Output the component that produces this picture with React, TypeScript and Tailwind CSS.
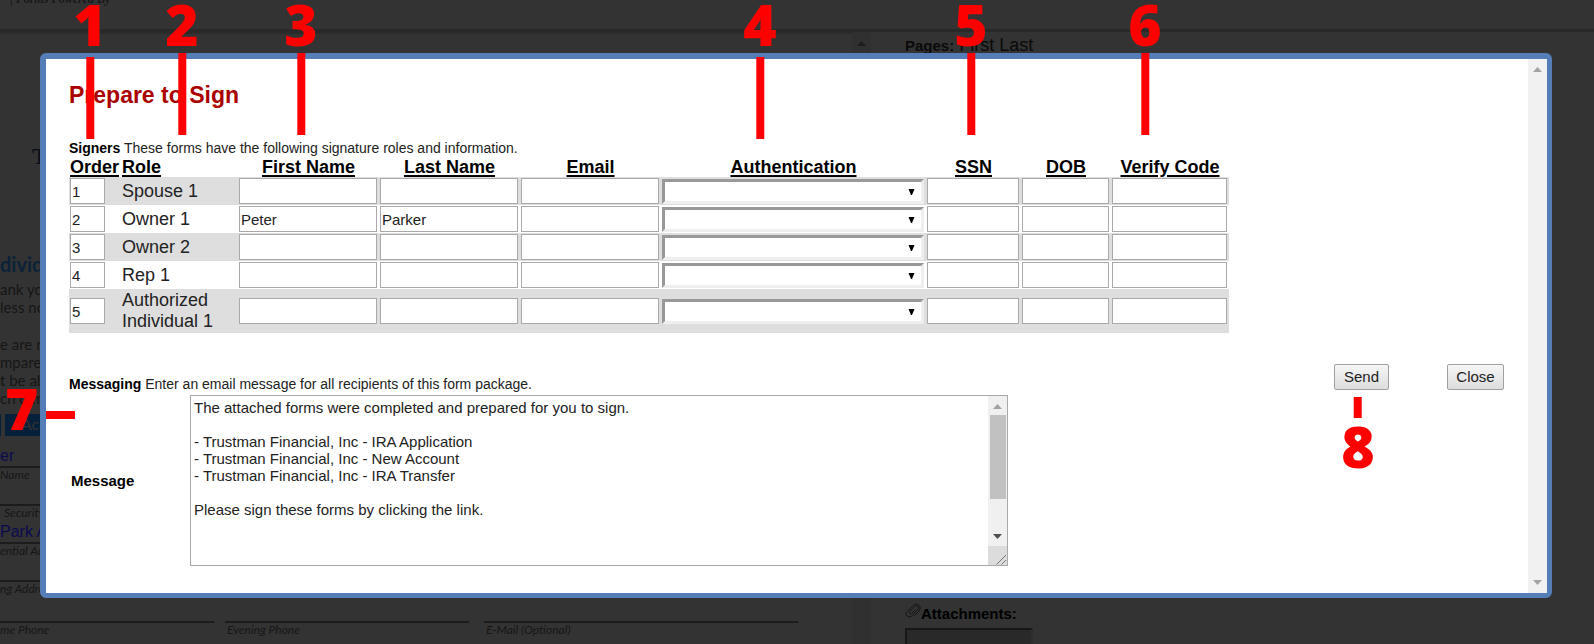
import { useState } from 'react';

interface Signer {
  order: string;
  role: string;
  firstName: string;
  lastName: string;
}

interface CalloutProps {
  label: string;
  className: string;
}

const signers: Signer[] = [
  { order: '1', role: 'Spouse 1', firstName: '', lastName: '' },
  { order: '2', role: 'Owner 1', firstName: 'Peter', lastName: 'Parker' },
  { order: '3', role: 'Owner 2', firstName: '', lastName: '' },
  { order: '4', role: 'Rep 1', firstName: '', lastName: '' },
  { order: '5', role: 'Authorized Individual 1', firstName: '', lastName: '' },
];

const defaultMessage = `The attached forms were completed and prepared for you to sign.

- Trustman Financial, Inc - IRA Application
- Trustman Financial, Inc - New Account
- Trustman Financial, Inc - IRA Transfer

Please sign these forms by clicking the link.
`;

const callouts: CalloutProps[] = [
  { label: '1', className: 'left-[90px] gap-1' },
  { label: '2', className: 'left-[182px]' },
  { label: '3', className: 'left-[301px]' },
  { label: '4', className: 'left-[760px] gap-1' },
  { label: '5', className: 'left-[971px]' },
  { label: '6', className: 'left-[1145px]' },
];

const formFields = [
  { value: 'er', label: 'Name', indent: 'pl-0' },
  { value: '', label: 'Security', indent: 'pl-1' },
  { value: 'Park A', label: 'ential Add', indent: 'pl-0' },
  { value: '', label: 'ng Addre', indent: 'pl-0' },
];

function Arrow({ down = false, className }: { down?: boolean; className: string }) {
  return (
    <svg viewBox="0 0 9 5" className={`w-[9px] h-[5px] ${className}`} fill="currentColor" aria-hidden="true">
      <path d={down ? 'M0 0H9L4.5 5Z' : 'M0 5H9L4.5 0Z'} />
    </svg>
  );
}

function Field({ label, value = '' }: { label: string; value?: string }) {
  const [text, setText] = useState(value);

  return (
    <input
      type="text"
      aria-label={label}
      value={text}
      onChange={(e) => setText(e.target.value)}
      className="block w-full h-[26px] border border-[#a9a9a9] bg-white px-px text-[15px] leading-4 text-[#222] outline-none"
    />
  );
}

function SignerRow({ signer }: { signer: Signer }) {
  return (
    <tr className="h-7 odd:bg-[#dedede]">
      <td className="pl-px pr-[17px]">
        <Field label={`Order of ${signer.role}`} value={signer.order} />
      </td>
      <td className="py-px text-lg leading-[21px] text-[#222]">
        <div className="w-[100px]">{signer.role}</div>
      </td>
      <td className="pl-px pr-0.5">
        <Field label={`First name of ${signer.role}`} value={signer.firstName} />
      </td>
      <td className="pl-px pr-0.5">
        <Field label={`Last name of ${signer.role}`} value={signer.lastName} />
      </td>
      <td className="pl-px pr-0.5">
        <Field label={`Email of ${signer.role}`} />
      </td>
      <td className="pl-px pr-0.5">
        <div className="relative pt-px">
          <select
            aria-label={`Authentication of ${signer.role}`}
            className="block w-full h-[25px] appearance-none border-[3px] border-t-[#999] border-l-[#999] border-r-[#eee] border-b-[#eee] bg-white outline-none"
          >
            <option value=""></option>
          </select>
          <svg viewBox="0 0 7 7" className="pointer-events-none absolute right-[9px] top-[11px] w-[7px] h-[7px]" aria-hidden="true">
            <path d="M0.5 0H6.5L4 6H3Z" />
          </svg>
        </div>
      </td>
      <td className="pl-px pr-0.5">
        <Field label={`SSN of ${signer.role}`} />
      </td>
      <td className="pl-px pr-0.5">
        <Field label={`DOB of ${signer.role}`} />
      </td>
      <td className="pl-px pr-0.5">
        <Field label={`Verify code of ${signer.role}`} />
      </td>
    </tr>
  );
}

function SignersTable() {
  return (
    <table className="w-[1160px] table-fixed border-collapse">
      <colgroup>
        <col className="w-[53px]" />
        <col className="w-[116px]" />
        <col className="w-[141px]" />
        <col className="w-[141px]" />
        <col className="w-[141px]" />
        <col className="w-[265px]" />
        <col className="w-[95px]" />
        <col className="w-[90px]" />
        <col className="w-[118px]" />
      </colgroup>
      <thead>
        <tr className="h-[21px] text-lg leading-5 font-bold text-black underline decoration-2 underline-offset-2 whitespace-nowrap">
          <th className="pl-px text-left">Order</th>
          <th className="text-left">Role</th>
          <th>First Name</th>
          <th>Last Name</th>
          <th>Email</th>
          <th>Authentication</th>
          <th>SSN</th>
          <th>DOB</th>
          <th>Verify Code</th>
        </tr>
      </thead>
      <tbody>
        {signers.map((signer) => (
          <SignerRow key={signer.order} signer={signer} />
        ))}
      </tbody>
    </table>
  );
}

function MessageBox() {
  const [message, setMessage] = useState(defaultMessage);

  return (
    <div className="mt-[3px] flex items-center">
      <label htmlFor="message" className="w-[121px] pl-0.5 text-[15px] leading-4 font-bold text-black">
        Message
      </label>
      <div className="flex w-[818px] h-[171px] border border-[#a9a9a9]">
        <textarea
          id="message"
          value={message}
          onChange={(e) => setMessage(e.target.value)}
          className="flex-1 resize-none overflow-hidden px-[3px] py-[3px] text-[15px] leading-[17px] text-[#222] outline-none"
        />
        <div className="flex w-[19px] flex-col items-center bg-[#f0f0f0]">
          <Arrow className="mt-2 text-[#a3a3a3]" />
          <div className="mt-[6px] h-[84px] w-4 bg-[#c1c1c1]" />
          <Arrow down className="mt-auto mb-[7px] text-[#505050]" />
          <div className="flex h-[19px] w-full items-end justify-end bg-[#dcdcdc]">
            <svg viewBox="0 0 11 11" className="w-[11px] h-[11px]" stroke="#777" fill="none" aria-hidden="true">
              <path d="M0.5 10.5L10 1M5.5 10.5L10 6" />
            </svg>
          </div>
        </div>
      </div>
    </div>
  );
}

function PrepareDialog() {
  const buttonClass =
    'h-[26px] rounded-[2px] border border-[#a0a0a0] bg-gradient-to-b from-[#f6f6f6] to-[#dddddd] text-[15px] leading-4 text-[#222]';

  return (
    <section
      role="dialog"
      aria-labelledby="dialog-title"
      className="relative flex rounded-[6px] border-t-[6px] border-r-[5px] border-b-[5px] border-l-[6px] border-[#557eb9] bg-white"
    >
      <div className="min-w-0 flex-1 pt-[22px] pr-6 pb-[27px] pl-[23px]">
        <h1 id="dialog-title" className="text-[23px] leading-7 font-bold text-[#a90000]">
          Prepare to Sign
        </h1>
        <p className="mt-[31px] text-sm leading-4 text-[#222]">
          <b className="text-black">Signers</b> These forms have the following signature roles and information.
        </p>
        <SignersTable />
        <div className="mt-[31px] flex h-7 justify-between">
          <p className="self-end text-sm leading-4 text-[#222]">
            <b className="text-black">Messaging</b> Enter an email message for all recipients of this form package.
          </p>
          <div className="flex items-start gap-[58px]">
            <button type="button" className={`w-[55px] ${buttonClass}`}>Send</button>
            <button type="button" className={`w-[57px] ${buttonClass}`}>Close</button>
          </div>
        </div>
        <MessageBox />
      </div>

      {/* Dialog scrollbar */}
      <div className="flex w-[19px] flex-col items-center justify-between bg-[#f1f1f1] py-2">
        <Arrow className="text-[#a3a3a3]" />
        <Arrow down className="text-[#a3a3a3]" />
      </div>
    </section>
  );
}

/* The form viewer, dimmed behind the dialog */
function DimmedPage() {
  return (
    <div className="absolute inset-0 flex flex-col overflow-hidden bg-[#333]" aria-hidden="true">
      <div className="h-[29px] pl-[10px]">
        <p className="-mt-[9px] font-['Liberation_Serif',serif] text-xs leading-4 font-bold text-[#181818] italic">
          | Forms Powered By
        </p>
      </div>
      <div className="flex min-h-0 flex-1 border-t-[3px] border-[#292929]">
        <div className="flex w-[852px] flex-col border-t-2 border-[#2b2b2b] font-[Lato,sans-serif] whitespace-nowrap text-[#161616]">
          <p className="mt-[108px] pl-8 font-['Liberation_Serif',serif] text-2xl leading-7 font-bold text-[#0a0f1c]">T</p>
          <p className="mt-[82px] text-xl leading-6 font-bold text-[#0b2238]">divid</p>
          <div className="mt-1 text-[15px] leading-[18px]">
            <p>ank yo</p>
            <p>less no</p>
            <p className="mt-[19px]">e are re</p>
            <p>mpare</p>
            <p>t be ab</p>
            <p>ch o me</p>
          </div>
          <div className="mt-[7px] flex h-[22px] gap-1 text-base leading-5 text-[#333]">
            <div className="w-px bg-[#06203a]" />
            <div className="flex-none bg-[#06203a] pr-10 pl-4">Acc</div>
          </div>
          <div className="mt-2">
            {formFields.map((field) => (
              <div key={field.label}>
                <p className="h-6 border-b-2 border-[#1c1c1c] font-['Liberation_Sans',sans-serif] text-base leading-6 text-[#0b0b50]">
                  {field.value}
                </p>
                <p className={`h-[14px] text-xs leading-[14px] italic ${field.indent}`}>{field.label}</p>
              </div>
            ))}
          </div>
          <div className="mt-[25px] flex gap-[11px] pr-[54px] text-xs leading-[14px] italic">
            <p className="w-[214px] border-t-2 border-[#1c1c1c]">me Phone</p>
            <p className="w-[244px] border-t-2 border-[#1c1c1c] pl-0.5">Evening Phone</p>
            <p className="ml-1 flex-1 border-t-2 border-[#1c1c1c] pl-0.5">E-Mail (Optional)</p>
          </div>
        </div>
        <div className="flex w-[19px] flex-col items-center bg-[#303030] pt-[9px]">
          <Arrow className="text-[#1c1c1c]" />
        </div>
        <div className="flex flex-1 flex-col pl-[34px] text-black">
          <p className="mt-[3px] text-lg leading-5 text-[#0a0a0a]">
            <b className="text-[15px]">Pages:</b> First Last
          </p>
          <div className="mt-[548px] flex items-start">
            <svg viewBox="0 0 16 16" className="-mt-px w-4 h-4" stroke="#161616" fill="none" strokeWidth="1">
              <path d="M4 9L9.5 3.5A2.3 2.3 0 0 1 12.8 6.8L6.5 13A3.1 3.1 0 0 1 2 8.6L9 1.8A4 4 0 0 1 14.5 7.4L9 13M10.5 6.5L6.5 10.5A1 1 0 0 1 5 9" />
            </svg>
            <b className="text-[15px] leading-5">Attachments:</b>
          </div>
          <div className="mt-1 h-8 w-32 flex-none border-2 border-[#171717] border-r-[#2e2e2e] bg-[#292929]" />
        </div>
      </div>
    </div>
  );
}

function Callout({ label, className }: CalloutProps) {
  return (
    <div className={`absolute -top-1 flex -translate-x-1/2 flex-col items-center ${className}`}>
      <span>{label}</span>
      <span className="h-[82px] w-2 bg-[#f00]" />
    </div>
  );
}

function App() {
  return (
    <main className="relative min-h-screen overflow-hidden pt-[53px] pr-[42px] pb-[46px] pl-10 font-['Liberation_Sans',Arial,sans-serif]">
      <DimmedPage />
      <PrepareDialog />

      {/* Numbered callouts over the dialog */}
      <div className="font-['Open_Sans',sans-serif] text-[57px] leading-[57px] font-extrabold text-[#f00]">
        {callouts.map((callout) => (
          <Callout key={callout.label} {...callout} />
        ))}
        <span className="absolute top-[380px] left-[5px]">7</span>
        <span className="absolute top-[411px] left-[46px] h-2 w-[29px] bg-[#f00]" />
        <div className="absolute top-[397px] right-[236px] flex translate-x-1/2 flex-col items-center">
          <span className="h-[21px] w-2 bg-[#f00]" />
          <span>8</span>
        </div>
      </div>
    </main>
  );
}

export default App;
